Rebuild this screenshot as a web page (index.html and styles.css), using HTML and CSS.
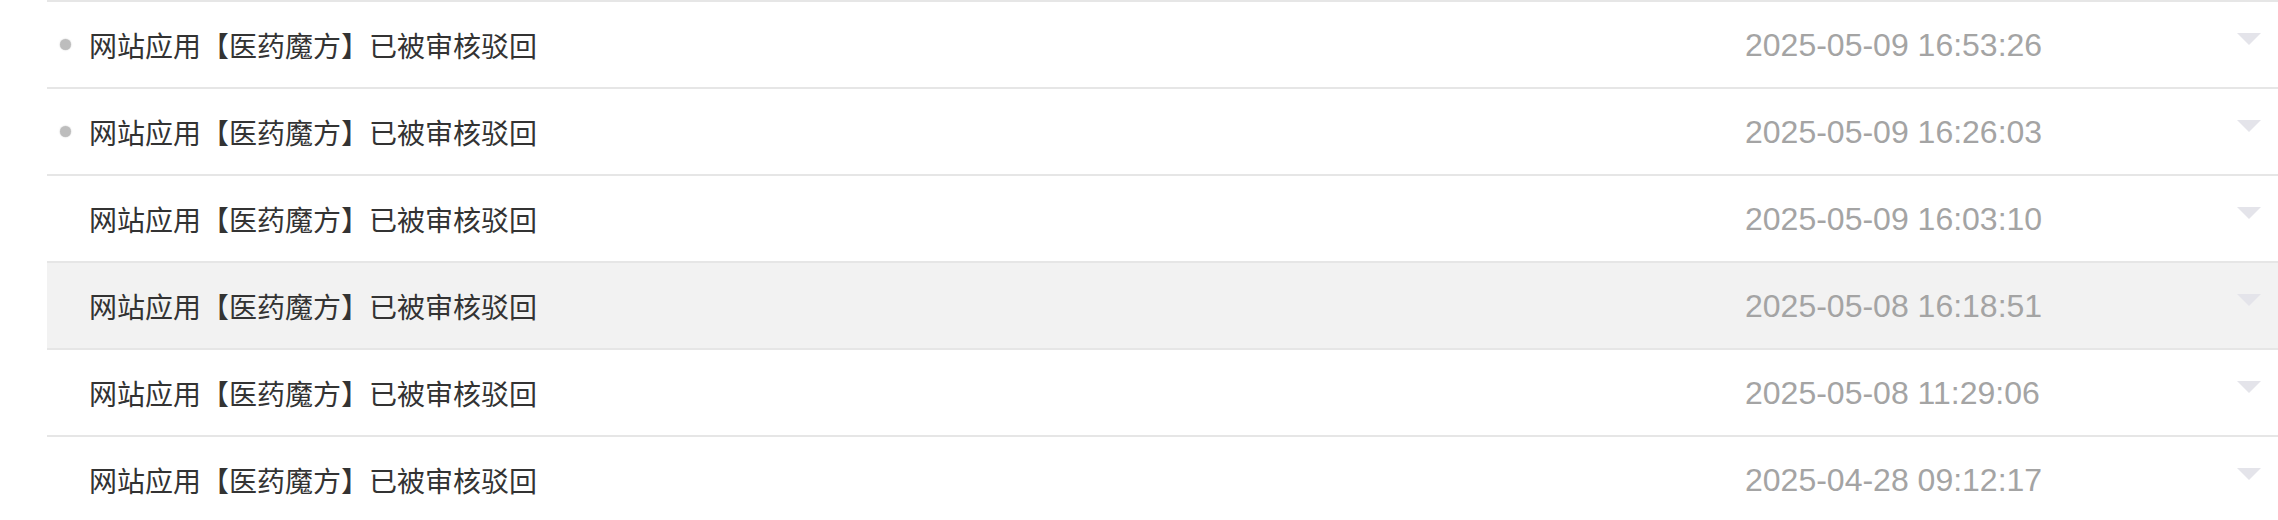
FILE: index.html
```html
<!DOCTYPE html>
<html lang="zh-CN">
<head>
<meta charset="utf-8">
<title>消息列表</title>
<link rel="stylesheet" href="styles.css">
</head>
<body>
<ul class="msg-list">
  <li class="msg unread">
    <span class="dot-col"><span class="dot"></span></span>
    <span class="title">网站应用【医药魔方】已被审核驳回</span>
    <span class="time">2025-05-09 16:53:26</span>
    <span class="arrow"></span>
  </li>
  <li class="msg unread">
    <span class="dot-col"><span class="dot"></span></span>
    <span class="title">网站应用【医药魔方】已被审核驳回</span>
    <span class="time">2025-05-09 16:26:03</span>
    <span class="arrow"></span>
  </li>
  <li class="msg">
    <span class="dot-col"></span>
    <span class="title">网站应用【医药魔方】已被审核驳回</span>
    <span class="time">2025-05-09 16:03:10</span>
    <span class="arrow"></span>
  </li>
  <li class="msg hover">
    <span class="dot-col"></span>
    <span class="title">网站应用【医药魔方】已被审核驳回</span>
    <span class="time">2025-05-08 16:18:51</span>
    <span class="arrow"></span>
  </li>
  <li class="msg">
    <span class="dot-col"></span>
    <span class="title">网站应用【医药魔方】已被审核驳回</span>
    <span class="time">2025-05-08 11:29:06</span>
    <span class="arrow"></span>
  </li>
  <li class="msg">
    <span class="dot-col"></span>
    <span class="title">网站应用【医药魔方】已被审核驳回</span>
    <span class="time">2025-04-28 09:12:17</span>
    <span class="arrow"></span>
  </li>
</ul>
</body>
</html>
```

FILE: styles.css
```css
html, body {
  margin: 0;
  padding: 0;
  background: #ffffff;
}

.msg-list {
  list-style: none;
  margin: 0 0 0 47px;
  padding: 0;
}

.msg {
  display: grid;
  grid-template-columns: 42px 1fr 492px 24px;
  align-items: center;
  height: 85px;
  border-top: 2px solid #e6e6e6;
  padding-right: 17px;
  background: #ffffff;
}

.msg.hover {
  background: #f2f2f2;
}

.dot-col {
  display: flex;
  align-items: center;
  padding-left: 13px;
}

.dot {
  width: 11px;
  height: 11px;
  border-radius: 50%;
  background: #bdbdbd;
  box-shadow: 0 0 1px 0.5px rgba(189, 189, 189, 0.5);
}

.title {
  font-family: "Noto Sans CJK SC", "Noto Sans", sans-serif;
  font-size: 28px;
  line-height: 40px;
  color: #333333;
  white-space: nowrap;
}

.time {
  font-family: "Liberation Sans", Arial, sans-serif;
  font-size: 32px;
  line-height: 40px;
  color: #a4a4a4;
  white-space: nowrap;
}

.arrow {
  width: 0;
  height: 0;
  border-left: 12px solid transparent;
  border-right: 12px solid transparent;
  border-top: 12px solid #e4e4ea;
  margin-top: -12px;
}
```
